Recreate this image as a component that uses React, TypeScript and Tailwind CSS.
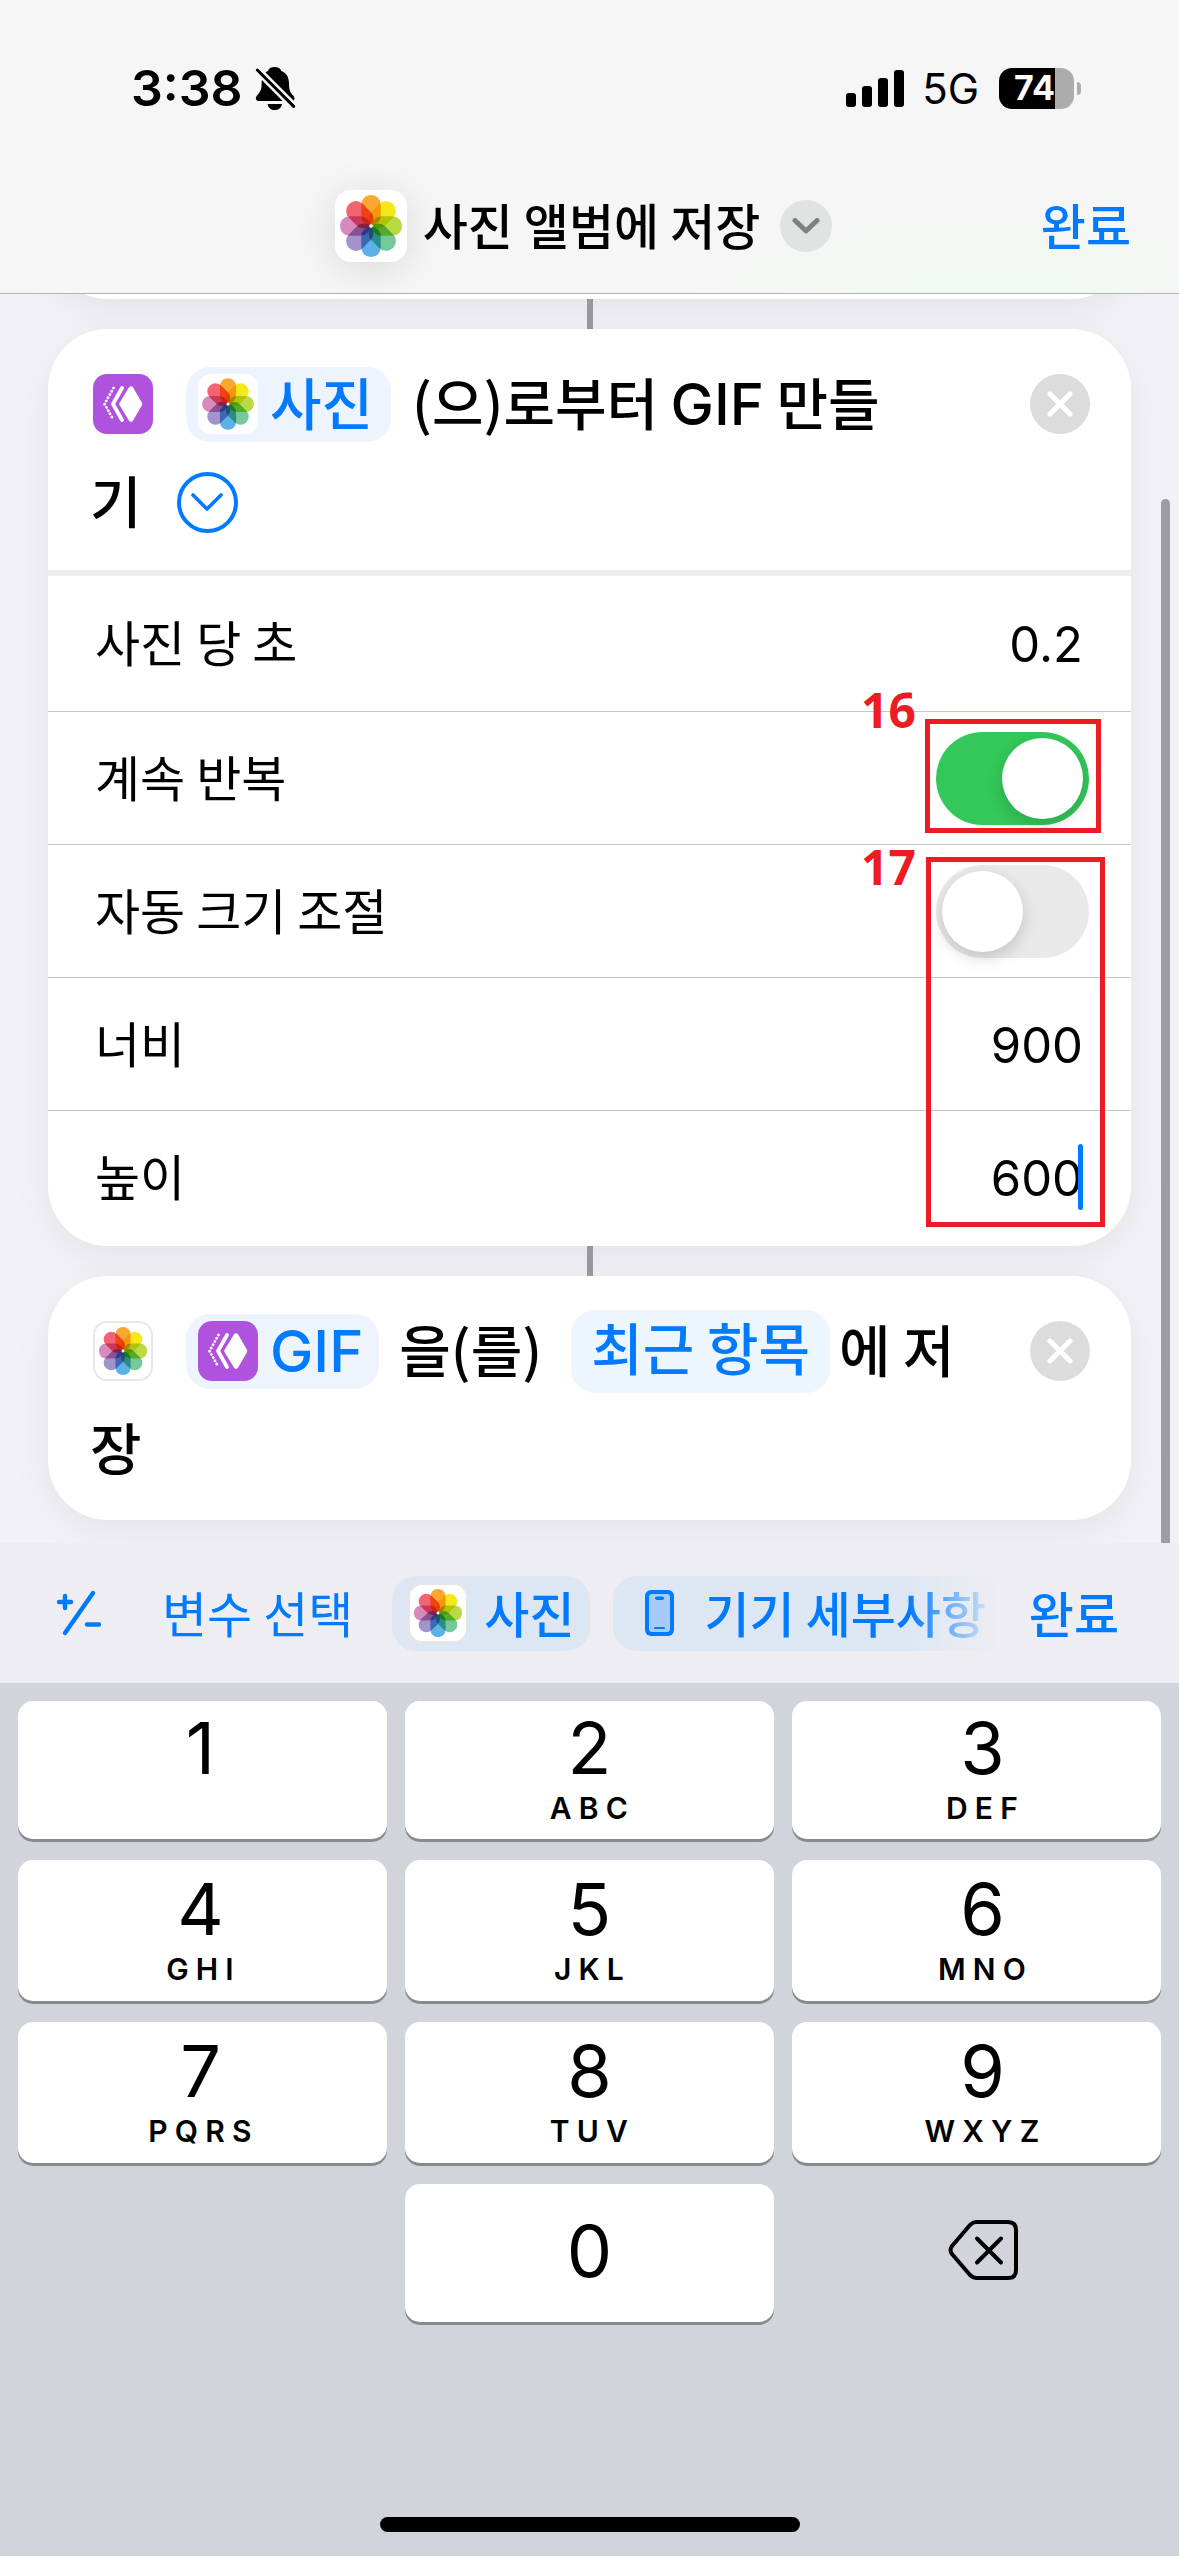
import { useState } from "react";

const KR = "font-['Noto_Sans_CJK_KR',sans-serif]";
const LATIN = "font-['Inter','Noto_Sans_CJK_KR',sans-serif]";

const petals = [
  { angle: 0, color: "#fba832" },
  { angle: 45, color: "#f6e71a" },
  { angle: 90, color: "#b9d945" },
  { angle: 135, color: "#74c998" },
  { angle: 180, color: "#5cb2e6" },
  { angle: 225, color: "#a493cb" },
  { angle: 270, color: "#d58bbb" },
  { angle: 315, color: "#f36472" },
];

function PhotosIcon({ className }: { className: string }) {
  return (
    <span className={`block shrink-0 bg-white ${className}`} aria-hidden="true">
      <svg viewBox="0 0 100 100" className="isolate size-full">
        {petals.map((p) => (
          <rect
            key={p.angle}
            x="36.5"
            y="7"
            width="27"
            height="42"
            rx="13"
            fill={p.color}
            transform={`rotate(${p.angle} 50 50)`}
            className="mix-blend-multiply"
          />
        ))}
        <circle cx="50" cy="50" r="2.5" fill="white" />
      </svg>
    </span>
  );
}

function GifIcon() {
  return (
    <svg viewBox="0 0 60 60" className="size-[60px] shrink-0" aria-hidden="true">
      <rect width="60" height="60" rx="14" fill="#af52de" />
      <path
        d="M38 14.5 L47 30 L38 45.5 L28.5 30 Z"
        fill="white"
        stroke="white"
        strokeWidth="4.5"
        strokeLinejoin="round"
      />
      <path
        d="M29 14 L20 30 L29 46"
        fill="none"
        stroke="white"
        strokeWidth="3.8"
        strokeLinecap="round"
        strokeLinejoin="round"
      />
      <path
        d="M20.5 14 L11.5 30 L20.5 46"
        fill="none"
        stroke="white"
        strokeWidth="2.8"
        strokeLinecap="round"
        strokeDasharray="0.1 3.6"
      />
    </svg>
  );
}

function BellOff() {
  return (
    <svg viewBox="405 48 123 135" className="h-[45px] w-[41px]" aria-hidden="true">
      <path
        d="M463 51 C474 51 482 55 484 63 C500 69 507 83 507 101 C507 121 512 128 520 137 C527 146 523 153 514 153 H417 C408 153 405 145 410 138 C419 127 425 121 425 101 C425 83 430 69 444 63 C446 55 453 51 463 51 Z"
        fill="black"
      />
      <path d="M443 162 H486 C484 174 475 180 464 180 C453 180 445 174 443 162 Z" fill="black" />
      <path d="M402 50 L531 179" stroke="#f6f6f6" strokeWidth="24" />
      <path d="M412 60 L521 169" stroke="black" strokeWidth="9" strokeLinecap="round" />
    </svg>
  );
}

function StatusBar() {
  return (
    <div className={`flex h-[62px] items-center justify-between pr-[98px] pl-[131px] ${LATIN}`}>
      <div className="flex items-center gap-3">
        <span className="text-[50px] leading-none font-semibold">3:38</span>
        <BellOff />
      </div>
      <div className="flex items-center">
        <svg viewBox="0 0 58 37" className="h-[37px] w-[58px]" aria-hidden="true">
          <rect x="0" y="23" width="10" height="14" rx="3" />
          <rect x="16" y="16" width="10" height="21" rx="3" />
          <rect x="32" y="8" width="10" height="29" rx="3" />
          <rect x="48" y="0" width="10" height="37" rx="3" />
        </svg>
        <span className="ml-[18px] pt-[2px] text-[42px] leading-none">5G</span>
        <div className="ml-[20px] flex h-[41px] w-[75px] items-center justify-center rounded-[13px] bg-[linear-gradient(90deg,#000_75%,#acacac_75%)] pr-1 text-[34px] leading-none font-bold text-white">
          74
        </div>
        <span className="ml-[3px] h-[13px] w-1 rounded-r-full bg-[#acacac]" />
      </div>
    </div>
  );
}

function Header() {
  return (
    <header className="relative z-10 border-b border-[#b2b2b4] bg-[#f6f6f6] bg-[radial-gradient(ellipse_at_84%_100%,#effaf0_0%,transparent_22%)] pt-[57px]">
      <StatusBar />
      <div className="mt-10 grid h-[134px] grid-cols-[1fr_auto_1fr] items-center px-[48px]">
        <span />
        <h1 className="m-0 flex items-center pr-3 text-[49px] leading-none font-medium">
          <PhotosIcon className="size-[72px] rounded-[16px] shadow-[0_6px_40px_rgba(0,0,0,0.12)]" />
          <span className="ml-[16px] pb-[6px]">사진 앨범에 저장</span>
          <button
            type="button"
            aria-label="메뉴 열기"
            className="ml-[20px] grid size-[52px] place-items-center rounded-full bg-[#e1e2e2]"
          >
            <svg viewBox="0 0 28 16" className="h-4 w-7" fill="none" stroke="#7f8081" strokeWidth="5" strokeLinecap="round" strokeLinejoin="round">
              <path d="M3 2.5 L14 13 L25 2.5" />
            </svg>
          </button>
        </h1>
        <button type="button" className="justify-self-end pb-[6px] text-[49px] leading-none font-medium text-[#007aff]">
          완료
        </button>
      </div>
    </header>
  );
}

function Connector() {
  return <div className="mx-auto h-[30px] w-[6px] bg-[#98989f]" />;
}

function CloseButton() {
  return (
    <button
      type="button"
      aria-label="동작 삭제"
      className="mt-[19px] grid size-[60px] shrink-0 place-items-center rounded-full bg-[#dcdcdc]"
    >
      <svg viewBox="0 0 26 26" className="size-[26px]" stroke="white" strokeWidth="5" strokeLinecap="round">
        <path d="M3 3 L23 23 M23 3 L3 23" />
      </svg>
    </button>
  );
}

const cardStyle = "rounded-[60px] bg-white shadow-[0_12px_40px_rgba(0,0,0,0.06)]";
const sentenceStyle = "flex max-w-[895px] flex-wrap items-center text-[56px] leading-[92px] font-medium";
const rowStyle = "relative flex h-[133px] items-center justify-between border-t border-[#c6c6c8] pl-[47px]";
const labelStyle = "pb-[6px]";
const valueStyle = `w-[300px] bg-transparent pt-[3px] pr-[48px] text-right text-[49px] leading-[66px] outline-none ${LATIN}`;

function Toggle({ id, initial }: { id: string; initial: boolean }) {
  const [on, setOn] = useState(initial);
  return (
    <input
      id={id}
      type="checkbox"
      role="switch"
      checked={on}
      onChange={() => setOn(!on)}
      className="mr-[42px] h-[93px] w-[153px] appearance-none rounded-full bg-[#e9e9ea] p-[6px] before:block before:size-[81px] before:rounded-full before:bg-white before:shadow-[0_6px_16px_rgba(0,0,0,0.16)] before:content-[''] checked:bg-[#34c759] checked:before:ml-[60px]"
    />
  );
}

function NumberField({ id, initial }: { id: string; initial: string }) {
  const [value, setValue] = useState(initial);
  return (
    <input
      id={id}
      type="text"
      inputMode="decimal"
      value={value}
      onChange={(e) => setValue(e.target.value)}
      className={valueStyle}
    />
  );
}

const markLabel = "absolute right-[215px] text-[48px] leading-none font-bold text-[#ed1c24] font-['Open_Sans',sans-serif]";

function GifCard() {
  return (
    <section className={cardStyle}>
      <div className="flex items-start justify-between pt-[26px] pr-[41px] pb-[19px] pl-[45px]">
        <div className={sentenceStyle}>
          <GifIcon />
          <button type="button" className="ml-[33px] flex h-[75px] items-center rounded-[24px] bg-[#edf4fe] pr-[18px] pl-3 text-[#007aff]">
            <PhotosIcon className="size-[60px] rounded-[14px]" />
            <span className="ml-3 pb-[6px]">사진</span>
          </button>
          <span className="ml-[21px] pb-[6px]">
            (으)로부터 <span className={`text-[58px] leading-none ${LATIN}`}>GIF</span> 만들
          </span>
          <span className="-ml-[3px] flex items-center">
            <span className="pb-[6px]">기</span>
            <button
              type="button"
              aria-label="세부사항 가리기"
              className="ml-[35px] grid size-[61px] place-items-center rounded-full border-4 border-[#007aff]"
            >
              <svg viewBox="0 0 32 18" className="h-[18px] w-8" fill="none" stroke="#007aff" strokeWidth="3.6" strokeLinecap="round" strokeLinejoin="round">
                <path d="M2 2 L16 16 L30 2" />
              </svg>
            </button>
          </span>
        </div>
        <CloseButton />
      </div>
      <div className="border-t-[6px] border-[#eeeeee] pb-[3px] text-[49px] leading-none">
        <div className="flex h-[135px] items-center justify-between pl-[47px]">
          <label htmlFor="seconds" className={labelStyle}>사진 당 초</label>
          <NumberField id="seconds" initial="0.2" />
        </div>
        <div className={rowStyle}>
          <label htmlFor="loop" className={labelStyle}>계속 반복</label>
          <Toggle id="loop" initial={true} />
          <span className="pointer-events-none absolute top-[7px] right-[30px] h-[114px] w-[176px] border-[5px] border-[#ed1c24]" />
          <span className={`${markLabel} top-[-26px]`}>16</span>
        </div>
        <div className={rowStyle}>
          <label htmlFor="autosize" className={labelStyle}>자동 크기 조절</label>
          <Toggle id="autosize" initial={false} />
          <span className="pointer-events-none absolute top-[12px] right-[26px] z-10 h-[370px] w-[179px] border-[5px] border-[#ed1c24]" />
          <span className={`${markLabel} top-[-2px]`}>17</span>
        </div>
        <div className={rowStyle}>
          <label htmlFor="width" className={labelStyle}>너비</label>
          <NumberField id="width" initial="900" />
        </div>
        <div className={rowStyle}>
          <label htmlFor="height" className={labelStyle}>높이</label>
          <NumberField id="height" initial="600" />
          <span className="absolute top-[33px] right-[48px] h-[66px] w-[5px] rounded-full bg-[#007aff]" />
        </div>
      </div>
    </section>
  );
}

function SaveCard() {
  return (
    <section className={cardStyle}>
      <div className="flex items-start justify-between pt-[26px] pr-[41px] pb-[22px] pl-[45px]">
        <div className={sentenceStyle}>
          <PhotosIcon className="size-[60px] rounded-[14px] border-2 border-[#e8e8e8]" />
          <button type="button" className="ml-[33px] flex h-[75px] items-center rounded-[24px] bg-[#edf4fe] pr-[16px] pl-3 text-[#007aff]">
            <GifIcon />
            <span className={`ml-3 text-[58px] ${LATIN}`}>GIF</span>
          </button>
          <span className="ml-[20px] pb-[6px]">을(를)</span>
          <button type="button" className="ml-[29px] flex h-[83px] items-center rounded-[24px] bg-[#edf5ff] px-[20px] text-[#007aff]">
            <span className="pb-[10px]">최근 항목</span>
          </button>
          <span className="ml-[9px] pb-[6px]">에 저</span>
          <span className="-ml-[3px] pb-[6px]">장</span>
        </div>
        <CloseButton />
      </div>
    </section>
  );
}

function Toolbar() {
  return (
    <div className="flex h-[140px] items-center bg-[#eeedf2] pr-[60px] pl-[54px] text-[49px] leading-none text-[#007aff]">
      <button type="button" aria-label="양수 음수 전환" className="shrink-0">
        <svg viewBox="0 0 50 50" className="size-[50px]" fill="none" stroke="#007aff" strokeWidth="4.4" strokeLinecap="round">
          <path d="M39 5 L11 45 M5 14 H17 M11 8 V20 M33 36.500 H45" />
        </svg>
      </button>
      <button type="button" className="ml-[58px] shrink-0 pb-1">변수 선택</button>
      <div className="ml-[39px] flex min-w-0 flex-1 gap-[23px] overflow-hidden [mask-image:linear-gradient(90deg,#000_calc(100%-90px),transparent)] font-medium">
        <button type="button" className="flex h-[75px] shrink-0 items-center rounded-[24px] bg-[#dde7f4] pr-[16px] pl-4">
          <PhotosIcon className="size-[60px] rounded-[14px] border-2 border-[#e6e6e8]" />
          <span className="ml-[16px] pb-1">사진</span>
        </button>
        <button type="button" className="flex h-[75px] shrink-0 items-center rounded-[24px] bg-[#dde7f4] pr-6 pl-8">
          <svg viewBox="0 0 29 46" className="h-[46px] w-[29px]" aria-hidden="true">
            <rect width="29" height="46" rx="6" fill="#007aff" />
            <rect x="4" y="4" width="21" height="38" rx="3" fill="#a6cbf8" />
            <rect x="10" y="6.500" width="9" height="3.500" rx="1.700" fill="#007aff" />
            <rect x="9" y="37" width="11" height="2" rx="1" fill="#007aff" />
          </svg>
          <span className="ml-[30px] pb-1 whitespace-nowrap">기기 세부사항</span>
        </button>
      </div>
      <button type="button" className="ml-[31px] shrink-0 pb-1 font-medium">완료</button>
    </div>
  );
}

const keys = [
  ["1", ""],
  ["2", "ABC"],
  ["3", "DEF"],
  ["4", "GHI"],
  ["5", "JKL"],
  ["6", "MNO"],
  ["7", "PQRS"],
  ["8", "TUV"],
  ["9", "WXYZ"],
];
const columnPadding = ["pr-1", "", "pl-3"];
const keyStyle = "flex flex-col items-center justify-center rounded-[15px] bg-white shadow-[0_3px_0_#898a8d]";

function Keypad() {
  return (
    <div className={`flex flex-1 flex-col justify-between bg-[#d1d4db] px-[18px] pt-[18px] pb-[24px] ${LATIN}`}>
      <div className="grid grid-cols-3 grid-rows-[138px_141px_141px_138px] gap-x-[18px] gap-y-[21px]">
        {keys.map(([digit, letters], i) => (
          <button key={digit} type="button" className={`${keyStyle} ${columnPadding[i % 3]}`}>
            <span className="text-[72px] leading-[66px]">{digit}</span>
            <span className="mt-[10px] h-[34px] pl-[6px] text-[30px] leading-[34px] font-semibold tracking-[0.24em]">{letters}</span>
          </button>
        ))}
        <button type="button" className={`${keyStyle} col-start-2 pb-1`}>
          <span className="text-[72px] leading-[64px]">0</span>
        </button>
        <button type="button" aria-label="지우기" className="flex items-center justify-center pb-[6px] pl-3">
          <svg viewBox="0 0 70 60" className="h-[60px] w-[70px]" fill="none" stroke="black" strokeWidth="4" strokeLinecap="round" strokeLinejoin="round">
            <path d="M28 2 H60 Q68 2 68 10 V50 Q68 58 60 58 H28 Q25 58 22 55 L4 34 Q1 30 4 26 L22 5 Q25 2 28 2 Z" />
            <path d="M29 18.500 L53 42.500 M53 18.500 L29 42.500" />
          </svg>
        </button>
      </div>
      <div className="mx-auto h-[15px] w-[420px] rounded-full bg-black" />
    </div>
  );
}

export default function App() {
  return (
    <div className={`flex min-h-screen flex-col bg-[#f2f1f6] text-black ${KR}`}>
      <Header />
      <main className="relative overflow-hidden px-[48px] pb-[23px]">
        <div className={`-mt-[115px] h-[120px] ${cardStyle}`} />
        <Connector />
        <GifCard />
        <Connector />
        <SaveCard />
        <div className="absolute top-[205px] right-[9px] bottom-0 w-[9px] rounded-t-full bg-[#9c9ca1]" />
      </main>
      <Toolbar />
      <Keypad />
    </div>
  );
}
